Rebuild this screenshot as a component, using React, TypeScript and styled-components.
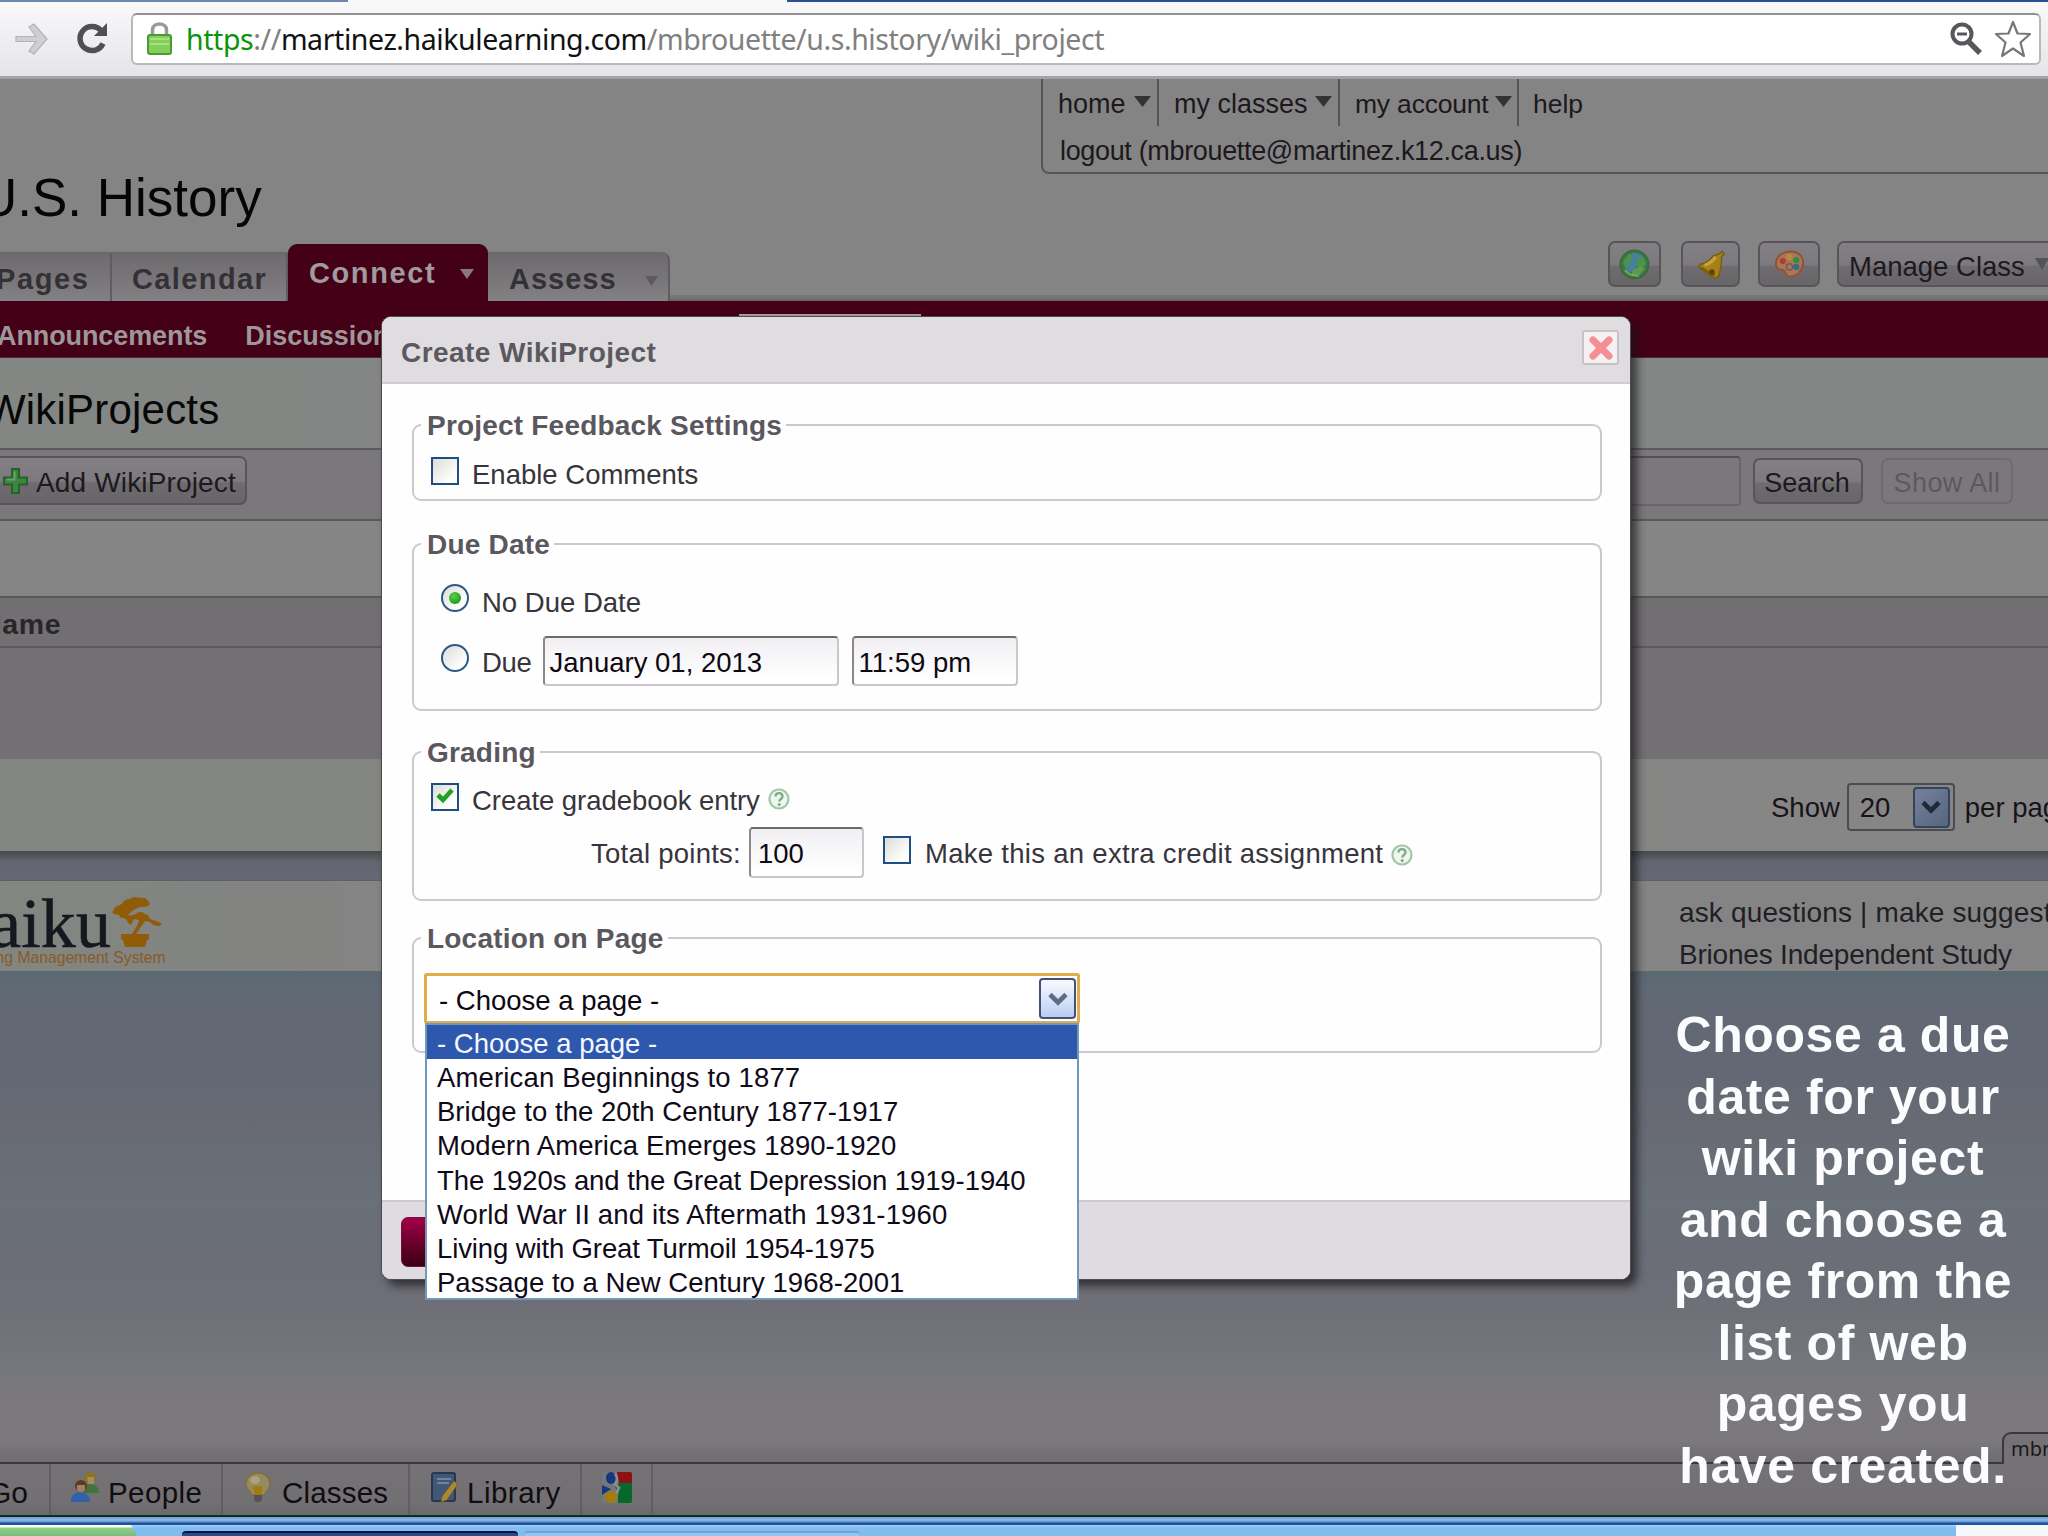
import React from 'react';
import styled, { createGlobalStyle } from 'styled-components';

const Global = createGlobalStyle`
  html, body { margin: 0; padding: 0; }
  body { font-family: "Liberation Sans", Arial, sans-serif; background: #7c797c; }
  *, *::before, *::after { box-sizing: border-box; }
`;

const Screen = styled.div`
  position: relative;
  width: 2048px;
  height: 1536px;
  overflow: hidden;
  display: flex;
  flex-direction: column;
`;

const Text = styled.span<{ $size?: number; $ls?: number; $drop?: number; $bold?: boolean; $color?: string; $ml?: number }>`
  flex: none;
  white-space: pre;
  line-height: 32px;
  font-size: ${(p) => p.$size ?? 27.5}px;
  letter-spacing: ${(p) => p.$ls ?? 0}px;
  font-weight: ${(p) => (p.$bold ? 700 : 400)};
  color: ${(p) => p.$color ?? 'inherit'};
  padding-top: ${(p) => p.$drop ?? 0}px;
  margin-left: ${(p) => p.$ml ?? 0}px;
`;

/* ---------- browser chrome ---------- */
const TabStrip = styled.div`
  flex: none;
  height: 2px;
  background: linear-gradient(90deg, #6d89ae 0 348px, #f6f8fb 348px 787px, #2d4f92 787px);
`;
const Toolbar = styled.div`
  flex: none;
  height: 77px;
  padding: 11px 7px 0 27px;
  display: flex;
  align-items: flex-start;
  background: linear-gradient(#f9f9fa, #e5e4e8);
  border-bottom: 3px solid #a3a2a6;
`;
const NavIcon = styled.svg<{ $ml?: number }>`
  flex: none;
  margin: 8px 0 0 ${(p) => p.$ml ?? 0}px;
`;
const Omnibox = styled.div`
  margin-left: 22px;
  flex: 1;
  height: 52px;
  display: flex;
  align-items: center;
  padding: 0 7px 0 14px;
  background: #fff;
  border: 2px solid #b9b9bd;
  border-top-color: #8f8f93;
  border-radius: 6px;
`;
const Url = styled.div`
  flex: 1;
  margin-left: 14px;
  font-family: "Noto Sans", "Open Sans", sans-serif;
  font-size: 28.5px;
  letter-spacing: -0.42px;
  line-height: 40px;
  white-space: pre;
  color: #808080;
`;
const Scheme = styled.span`color: #0b930b;`;
const Host = styled.span`color: #111;`;

/* ---------- class header ---------- */
const Header = styled.header`
  flex: none;
  height: 222px;
  display: grid;
  grid-template-columns: 1041px 1fr;
  background: linear-gradient(#848484 0 216px, #797678 216px 219px, #686568 221px);
`;
const HeaderLeft = styled.div`
  display: flex;
  flex-direction: column;
  overflow: hidden;
`;
const ClassTitle = styled.h1`
  margin: 0 0 0 -21px;
  height: 165px;
  padding-top: 87px;
  font-size: 53px;
  font-weight: 400;
  line-height: 64px;
  color: #050505;
  white-space: pre;
`;
const Tabs = styled.div`
  height: 57px;
  display: flex;
  align-items: flex-end;
`;
const Tab = styled.div<{ $w: number; $active?: boolean; $pad: number }>`
  flex: none;
  width: ${(p) => p.$w}px;
  height: ${(p) => (p.$active ? 57 : 49)}px;
  padding: ${(p) => (p.$active ? 13 : 9)}px 0 0 ${(p) => p.$pad}px;
  display: flex;
  align-items: flex-start;
  color: ${(p) => (p.$active ? '#a09b9e' : '#333136')};
  background: ${(p) => (p.$active ? '#440017' : 'linear-gradient(#6e6b6e, #79777a 60%, #828284)')};
  border-radius: ${(p) => (p.$active ? '9px 9px 0 0' : '0')};
  border-right: ${(p) => (p.$active ? 'none' : '2px solid #5f5d60')};
  border-top: ${(p) => (p.$active ? 'none' : '2px solid #6a686b')};
  &:last-child { border-radius: 0 8px 0 0; }
`;
const HeaderRight = styled.div`
  display: flex;
  flex-direction: column;
`;
const AccountBox = styled.div`
  height: 95px;
  border-left: 2px solid #555457;
  border-bottom: 2px solid #555457;
  border-radius: 0 0 0 8px;
  color: #1c181c;
`;
const AccountRow = styled.div`
  height: 47px;
  display: flex;
`;
const AccountItem = styled.div<{ $w: number; $pad: number }>`
  width: ${(p) => p.$w}px;
  padding: 9px 0 0 ${(p) => p.$pad}px;
  display: flex;
  align-items: flex-start;
  border-right: 2px solid #555457;
  &:last-child { border-right: none; }
`;
const Tools = styled.div`
  display: flex;
  margin: 67px 0 0 567px;
  width: 440px;
  overflow: hidden;
`;
const Button = styled.div<{ $w: number; $h?: number; $ml?: number; $faded?: boolean }>`
  flex: none;
  width: ${(p) => p.$w}px;
  height: ${(p) => p.$h ?? 46}px;
  margin-left: ${(p) => p.$ml ?? 0}px;
  display: flex;
  align-items: center;
  justify-content: center;
  white-space: pre;
  border: 2px solid ${(p) => (p.$faded ? '#6d6b6e' : '#575558')};
  border-radius: 7px;
  color: ${(p) => (p.$faded ? '#5c595d' : '#1d191e')};
  background: ${(p) => (p.$faded ? 'transparent' : 'linear-gradient(#828084, #7c7a7e 52%, #6f6c70 55%, #686569)')};
`;
const MenuButton = styled(Button)`
  justify-content: flex-start;
  padding-left: 10px;
`;
const SubNav = styled.nav`
  flex: none;
  height: 57px;
  display: flex;
  padding: 19px 0 0 0;
  margin-left: -3px;
  background: #440017;
  color: #9d979b;
  border-bottom: 1px solid #4c2630;
`;
const ActiveSubTab = styled.div`
  width: 182px;
  height: 4px;
  margin: -6px 0 0 335px;
  border-top: 2px solid #a79fa4;
`;

/* ---------- page bands ---------- */
const Band = styled.div<{ $h: number; $bg: string; $line?: string }>`
  flex: none;
  height: ${(p) => p.$h}px;
  display: flex;
  align-items: flex-start;
  background: ${(p) => p.$bg};
  border-bottom: ${(p) => (p.$line ? `2px solid ${p.$line}` : 'none')};
  overflow: hidden;
`;
const SectionTitle = styled.h2`
  margin: 28px 0 0 -14px;
  font-size: 42px;
  font-weight: 400;
  line-height: 48px;
  letter-spacing: 0.2px;
  color: #070707;
`;
const AddButton = styled(Button)`
  margin: 6px 0 0 -12px;
  justify-content: flex-start;
  padding-left: 12px;
`;
const SearchField = styled.div`
  width: 200px;
  height: 50px;
  margin: 6px 0 0 1294px;
  border: 2px solid #68666a;
  border-top-color: #535155;
  border-radius: 4px;
`;
const SearchTools = styled.div`
  display: flex;
  padding-top: 8px;
  margin-left: 12px;
`;
const ColumnTitle = styled(Text)`
  margin-top: 10px;
`;
const PageSize = styled.div`
  display: flex;
  align-items: center;
  height: 48px;
  margin: 24px 0 0 1771px;
  color: #171317;
`;
const SizeSelect = styled.div`
  width: 108px;
  height: 48px;
  margin: 0 10px 0 7px;
  padding: 0 3px 0 11px;
  display: flex;
  align-items: center;
  justify-content: space-between;
  border: 2px solid #4c4b50;
  border-radius: 4px;
`;
const Footer = styled.div`
  flex: none;
  height: 91px;
  display: grid;
  grid-template-columns: 1679px 1fr;
  background: linear-gradient(90deg, #828580, #848484 500px);
  border-top: 1px solid #5d6066;
  overflow: hidden;
`;
const Logo = styled.div`
  display: flex;
  flex-direction: column;
  padding-top: 7px;
`;
const LogoTop = styled.div`
  display: flex;
  height: 62px;
  align-items: flex-start;
`;
const LogoWord = styled.span`
  margin-left: -45px;
  width: 157px;
  white-space: pre;
  font-family: "Liberation Serif", serif;
  font-size: 70px;
  line-height: 72px;
  letter-spacing: 0.1px;
  color: #15181f;
  -webkit-text-stroke: 0.6px #15181f;
`;
const LogoMark = styled.div`
  padding-top: 8px;
`;
const LogoTag = styled.span`
  margin: -2px 0 0 -48px;
  font-size: 15.7px;
  line-height: 20px;
  white-space: pre;
  color: #895a28;
`;
const FooterLinks = styled.div`
  display: flex;
  flex-direction: column;
  gap: 10px;
  padding-top: 16px;
  color: #221e25;
`;
const Backdrop = styled.div`
  flex: none;
  height: 491px;
  background: linear-gradient(#5a6972 0, #5f6974 14px, #636974 34px, #636974 110px, #686a73 150px, #697078 230px, #6b6d77 285px, #6f6f78 340px, #73767c 385px, #7a787c 420px, #7c797d 470px, #747175 482px, #716e72);
`;
const BottomBar = styled.div`
  flex: none;
  height: 55px;
  display: flex;
  border-top: 2px solid #39383a;
  border-bottom: 2px solid #10282e;
  background: linear-gradient(#757276, #737074 75%, #686b66);
  color: #0f0d10;
`;
const BarItem = styled.div<{ $w: number; $pad: number }>`
  flex: none;
  width: ${(p) => p.$w}px;
  padding: 8px 0 0 ${(p) => p.$pad}px;
  display: flex;
  align-items: flex-start;
  border-right: 2px solid #605e63;
`;
const Taskbar = styled.div`
  flex: none;
  height: 19px;
  padding-top: 8px;
  display: flex;
  align-items: flex-start;
  background: linear-gradient(#6d9cc4 0, #8dbbe6 3px, #5f93c8 5px, #1f4fa6 6px, #2350a8 8px, #a8d0f2 8px, #7fbdee 11px);
`;
const StartButton = styled.div`
  width: 137px;
  height: 11px;
  background: linear-gradient(#f4fff0 0 2px, #8fce8d 3px, #79bd77);
  clip-path: polygon(0 0, 131px 0, 137px 100%, 0 100%);
`;
const TaskButton = styled.div<{ $ml: number; $active?: boolean }>`
  width: 336px;
  height: 5px;
  margin: 6px 0 0 ${(p) => p.$ml}px;
  border-radius: 4px 4px 0 0;
  border-top: 2px solid ${(p) => (p.$active ? '#04104c' : '#6fa0dc')};
  background: ${(p) => (p.$active ? '#2c4a86' : '#92c6f3')};
`;
const Tray = styled.div`
  margin-left: auto;
  width: 92px;
  height: 11px;
  background: #f3f8fd;
`;
const UserTab = styled.div`
  position: absolute;
  left: 2002px;
  top: 1432px;
  width: 60px;
  height: 32px;
  padding-left: 7px;
  border: 2px solid #39383a;
  border-bottom: none;
  border-radius: 9px 0 0 0;
  background: #757276;
  font-family: "Noto Sans", sans-serif;
  font-size: 20px;
  line-height: 29px;
  color: #1a181c;
`;
const Caption = styled.div`
  position: absolute;
  left: 1653px;
  top: 1005px;
  width: 380px;
  text-align: center;
  font-size: 50px;
  font-weight: 700;
  line-height: 61.5px;
  letter-spacing: 0.6px;
  white-space: pre;
  color: #fbfcfe;
`;

/* ---------- dialog ---------- */
const Dialog = styled.section`
  position: absolute;
  left: 381px;
  top: 316px;
  width: 1250px;
  height: 964px;
  display: flex;
  flex-direction: column;
  background: #fefefe;
  border: 1px solid #4d4b4e;
  border-radius: 10px;
  box-shadow: 6px 6px 8px rgba(20, 18, 22, 0.65);
  color: #38343c;
`;
const DialogHead = styled.div`
  flex: none;
  height: 67px;
  padding: 13px 11px 0 19px;
  display: flex;
  justify-content: space-between;
  align-items: flex-start;
  background: #dfdde0;
  border-bottom: 2px solid #cfcdd0;
  border-radius: 9px 9px 0 0;
  color: #5b585f;
`;
const CloseButton = styled.div`
  width: 37px;
  height: 35px;
  display: flex;
  align-items: center;
  justify-content: center;
  background: #f5f1f3;
  border: 2px solid #c6c2c6;
  border-radius: 3px;
`;
const DialogBody = styled.div`
  flex: 1;
  padding: 25px 28px 0 30px;
`;
const Fieldset = styled.fieldset<{ $h: number; $mt?: number }>`
  height: ${(p) => p.$h}px;
  margin: ${(p) => p.$mt ?? 0}px 0 0;
  padding: 0;
  min-width: 0;
  border: 2px solid #cbc9cd;
  border-radius: 9px;
`;
const Legend = styled.legend`
  margin-left: 7px;
  padding: 1px 4px 0 6px;
  font-size: 28px;
  font-weight: 700;
  line-height: 31px;
  letter-spacing: 0.2px;
  color: #5a575f;
`;
const Row = styled.div<{ $h: number; $mt: number; $pad: number }>`
  display: flex;
  align-items: center;
  height: ${(p) => p.$h}px;
  margin-top: ${(p) => p.$mt}px;
  padding-left: ${(p) => p.$pad}px;
`;
const CheckBox = styled.span<{ $ml?: number; $lift?: number }>`
  flex: none;
  width: 28px;
  height: 28px;
  margin: 0 0 ${(p) => p.$lift ?? 0}px ${(p) => p.$ml ?? 0}px;
  display: flex;
  align-items: center;
  justify-content: center;
  border: 2px solid #1d4f83;
  background: linear-gradient(135deg, #dcdcd7, #fdfdfc 75%);
`;
const Radio = styled(CheckBox)`
  border-radius: 50%;
  border-color: #2b5a88;
`;
const RadioDot = styled.span`
  width: 12px;
  height: 12px;
  border-radius: 50%;
  background: radial-gradient(circle at 40% 35%, #5ad24c, #1c9a1c 75%);
`;
const Field = styled.div<{ $w: number; $ml: number; $h?: number }>`
  flex: none;
  width: ${(p) => p.$w}px;
  height: ${(p) => p.$h ?? 50}px;
  margin-left: ${(p) => p.$ml}px;
  padding-left: 5px;
  display: flex;
  align-items: center;
  border: 2px solid #c9c7cb;
  border-top-color: #6d6b70;
  border-left-color: #8a888d;
  border-radius: 4px;
  background: linear-gradient(#f1eff2, #fff 90%);
  color: #0d0812;
`;
const Select = styled.div`
  position: relative;
  width: 656px;
  height: 51px;
  margin: 19px 0 0 10px;
  padding: 0 1px 0 12px;
  display: flex;
  align-items: center;
  justify-content: space-between;
  background: #fff;
  border: 3px solid #e0ac4c;
  border-radius: 3px;
  color: #0d0812;
`;
const ArrowButton = styled.div<{ $dim?: boolean }>`
  width: 37px;
  height: 41px;
  display: flex;
  align-items: center;
  justify-content: center;
  border: 2px solid ${(p) => (p.$dim ? '#34445c' : '#41517a')};
  border-radius: 4px;
  background: ${(p) => (p.$dim ? 'linear-gradient(135deg, #77809a, #56657f)' : 'linear-gradient(#f4f7fd 10%, #b9cdf2)')};
`;
const Options = styled.ul`
  position: absolute;
  z-index: 2;
  left: -2px;
  top: 47px;
  width: 654px;
  height: 277px;
  margin: 0;
  padding: 0;
  list-style: none;
  background: #fff;
  border: 2px solid #7396bb;
`;
const Option = styled.li<{ $selected?: boolean; $ls?: number }>`
  height: 34.15px;
  padding-left: 10px;
  font-size: 27.5px;
  line-height: 37px;
  letter-spacing: ${(p) => p.$ls ?? 0}px;
  white-space: pre;
  color: ${(p) => (p.$selected ? '#f4f7ff' : '#100a18')};
  background: ${(p) => (p.$selected ? '#2e58ae' : 'transparent')};
`;
const DialogFoot = styled.div`
  flex: none;
  height: 79px;
  padding: 15px 0 0 19px;
  background: #dedce0;
  border-top: 2px solid #cbc9cc;
  border-radius: 0 0 9px 9px;
`;
const SaveButton = styled.div`
  width: 120px;
  height: 50px;
  border-radius: 7px;
  border: 1px solid #6d1238;
  background: linear-gradient(#a5004b, #6c002c 50%, #3b0014);
`;

/* ---------- drawings ---------- */
const CaretMark = styled.svg<{ $ml?: number; $mt?: number }>`
  flex: none;
  margin: ${(p) => p.$mt ?? 8}px 0 0 ${(p) => p.$ml ?? 0}px;
`;
const Caret = ({ w = 17, h = 11, ml = 0, mt = 8, color = '#343236' }) => (
  <CaretMark width={w} height={h} viewBox="0 0 18 12" preserveAspectRatio="none" $ml={ml} $mt={mt}>
    <path d="M0 0h18L9 12z" fill={color} />
  </CaretMark>
);
const Chevron = ({ color }: { color: string }) => (
  <svg width="20" height="14" viewBox="0 0 20 14">
    <path d="M2 2.500l8 8 8-8" fill="none" stroke={color} strokeWidth="4.600" />
  </svg>
);
const HelpMark = styled.svg`
  flex: none;
  margin: 4px 0 0 8px;
`;
const Help = () => (
  <HelpMark width="22" height="22" viewBox="0 0 22 22">
    <circle cx="11" cy="11" r="9.500" fill="#eef6ee" stroke="#a3c6a8" strokeWidth="2.200" />
    <path d="M7.500 8.500c0-4.500 7-4.500 7 0 0 2.500-3.200 2.600-3.200 5" fill="none" stroke="#7fab86" strokeWidth="2.400" />
    <circle cx="11.200" cy="16.500" r="1.500" fill="#7fab86" />
  </HelpMark>
);
const Globe = () => (
  <svg width="31" height="31" viewBox="0 0 32 32">
    <circle cx="16" cy="16" r="14.500" fill="#3a7a48" stroke="#3c6a3a" strokeWidth="2" />
    <path d="M15 4c6 0 10 3 12 8l-8 4-4 8-7-1c-4-9-1-17 7-19z" fill="#4a7f9c" />
    <path d="M4 14l6-9 4 2-3 8-4 5zM20 8l6 2 2 6-6 4-4-4z" fill="#4c9248" />
    <path d="M14 22l8-5 5 3-6 7-8 1z" fill="#5d9a4f" />
    <path d="M6 22l5 4 9 2" stroke="#78a868" strokeWidth="2" fill="none" />
  </svg>
);
const Bell = () => (
  <svg width="30" height="31" viewBox="0 0 32 32">
    <path d="M28 2l2 3-3 3c1 8-1 14-3 21l-4 2L3 19l1-3c6-1 10-3 14-9l6-2z" fill="#a58118" stroke="#7a5a0d" strokeWidth="1.500" />
    <path d="M9 17c6-2 9-5 12-9" stroke="#c2a440" strokeWidth="3.500" fill="none" />
    <path d="M5 19l15 9" stroke="#7a5a0d" strokeWidth="2" />
    <circle cx="17" cy="24" r="3" fill="#5f4208" />
  </svg>
);
const Palette = () => (
  <svg width="31" height="30" viewBox="0 0 32 30">
    <path d="M17 2c9 0 14 6 13 13s-6 13-14 13c-5 0-3-6-7-7-4 0-7-2-7-6C2 7 9 2 17 2z" fill="#a6785a" stroke="#925230" strokeWidth="2" />
    <circle cx="9" cy="12" r="3.200" fill="#b23a34" />
    <circle cx="16" cy="8" r="3.200" fill="#b0903b" />
    <circle cx="23" cy="11" r="3.200" fill="#3c8a42" />
    <circle cx="23" cy="18" r="3.200" fill="#2f6f96" />
    <circle cx="16" cy="18" r="3.200" fill="#868086" stroke="#925230" strokeWidth="1.500" />
  </svg>
);
const Plus = () => (
  <svg width="27" height="28" viewBox="0 0 27 28">
    <path d="M10 2h7v8.500h8v7h-8V26h-7v-8.500H2v-7h8z" fill="#3f8540" stroke="#28602b" strokeWidth="2" />
    <path d="M12.500 4.500v8H5" stroke="#67a463" strokeWidth="2" fill="none" />
  </svg>
);
const Bonsai = () => (
  <svg width="52" height="52" viewBox="0 0 52 52" fill="#915c08">
    <path d="M11 6c1-2 4-3 7-3 2-2 6-3 9-1 4-1 8 0 9 3 2 1 2 4 0 5-3 1-6 1-8 1-4 1-6 3-8 4l-4 4c3 1 7 0 9-2 3-2 6-1 8 1 3 0 4 2 5 5l6 2 5 2c1 1 0 3-2 3l-6-1-3-3-5-1-9 13h-4l5-8 2-6-5-1-3 6-3-2-2-4-6-2-1-2-5-1c-2-1-2-3 0-4 0-3 3-4 6-5l3-2z" />
    <path d="M9 38h28v5l-2 1-2 7H13l-2-7-2-1z" />
  </svg>
);
const People = () => (
  <svg width="30" height="31" viewBox="0 0 30 31">
    <circle cx="20" cy="6" r="6" fill="#8b7426" />
    <path d="M17 5h7v6l-3 3-3-3z" fill="#a58c66" />
    <path d="M12 20c0-6 5-8 9-8s8 3 8 9H15z" fill="#43733c" />
    <circle cx="11" cy="14" r="6" fill="#5d3a24" />
    <path d="M7 13h8v5l-4 4-4-4z" fill="#a07f63" />
    <path d="M1 30c0-7 4-10 9-10s10 3 10 10z" fill="#2f62a8" />
  </svg>
);
const Bulb = () => (
  <svg width="26" height="31" viewBox="0 0 26 31">
    <path d="M13 1c7 0 12 5 12 11 0 5-4 7-6 11H7C5 19 1 17 1 12 1 6 6 1 13 1z" fill="#958a60" stroke="#80703f" strokeWidth="1.500" />
    <path d="M8 14h10l-2 9h-6z" fill="#a37a10" />
    <ellipse cx="10" cy="8" rx="5" ry="4" fill="#aaa27f" />
    <path d="M9 23h8v5l-2 2h-4l-2-2z" fill="#55535a" />
  </svg>
);
const Notebook = () => (
  <svg width="28" height="31" viewBox="0 0 28 31">
    <rect x="1" y="1" width="23" height="28" rx="2" fill="#3f5878" stroke="#26374f" strokeWidth="2" />
    <path d="M6 7h14M6 11h12" stroke="#6f849e" strokeWidth="2" />
    <path d="M23 9l4 3-11 16-6 2 1-6z" fill="#a68a3a" stroke="#77561c" />
  </svg>
);
const Google = () => (
  <svg width="30" height="31" viewBox="0 0 30 31">
    <rect width="30" height="31" rx="2" fill="#77777b" />
    <path d="M15 0h13q2 0 2 2v9H17z" fill="#8f1010" />
    <path d="M17 11h13v18q0 2-2 2H16V19l-3-4z" fill="#07682c" />
    <path d="M0 13l9 4-9 6z" fill="#17367e" />
    <ellipse cx="9" cy="6" rx="5" ry="6" fill="#17367e" />
    <ellipse cx="9" cy="25" rx="6" ry="6" fill="#a67c08" />
    <path d="M13 2q4 5 0 10l4 4q-2 3-2 6" stroke="#8d8d90" strokeWidth="2.500" fill="none" />
  </svg>
);

const PAGES: { name: string; ls: number }[] = [
  { name: 'American Beginnings to 1877', ls: 0.15 },
  { name: 'Bridge to the 20th Century 1877-1917', ls: 0.03 },
  { name: 'Modern America Emerges 1890-1920', ls: 0.07 },
  { name: 'The 1920s and the Great Depression 1919-1940', ls: -0.07 },
  { name: 'World War II and its Aftermath 1931-1960', ls: 0.15 },
  { name: 'Living with Great Turmoil 1954-1975', ls: -0.12 },
  { name: 'Passage to a New Century 1968-2001', ls: 0.03 },
];

const CAPTION = ['Choose a due', 'date for your', 'wiki project', 'and choose a', 'page from the', 'list of web', 'pages you', 'have created.'];

const ToolbarGlyph = styled.svg<{ $mr?: number }>`
  flex: none;
  margin-right: ${(p) => p.$mr ?? 0}px;
`;

export default function App() {
  return (
    <Screen>
      <Global />
      <TabStrip />
      <Toolbar>
        <NavIcon $ml={-12} width="34" height="34" viewBox="0 0 34 34">
          <path d="M1 15.500h20L14 6l5-3 13 15-13 15-5-3 7-9.500H1z" fill="#cfcfd2" stroke="#b4b4b8" strokeWidth="1.200" />
        </NavIcon>
        <NavIcon $ml={26} width="34" height="34" viewBox="0 0 34 34">
          <path d="M28 22.500a12 12 0 1 1-2-13" fill="none" stroke="#505054" strokeWidth="5.500" />
          <path d="M32 2v13H19z" fill="#505054" />
        </NavIcon>
        <Omnibox>
          <ToolbarGlyph width="25" height="34" viewBox="0 0 25 34">
            <path d="M5.500 15V8c0-8 14-8 14 0v7" fill="none" stroke="#9a9a9e" strokeWidth="3.500" />
            <rect x="1" y="13" width="23" height="19" rx="2" fill="#84cf5c" stroke="#4d9a35" strokeWidth="2" />
            <path d="M3 17h19M3 22h19" stroke="#a5e382" strokeWidth="2" />
          </ToolbarGlyph>
          <Url><Scheme>https</Scheme>://<Host>martinez.haikulearning.com</Host>/mbrouette/u.s.history/wiki_project</Url>
          <ToolbarGlyph $mr={11} width="34" height="34" viewBox="0 0 34 34">
            <circle cx="13" cy="12" r="9.500" fill="#fff" stroke="#58585c" strokeWidth="4" />
            <path d="M8 12h10" stroke="#58585c" strokeWidth="3" />
            <path d="M19 19l12 12" stroke="#58585c" strokeWidth="5.500" />
          </ToolbarGlyph>
          <ToolbarGlyph width="38" height="38" viewBox="0 0 38 38">
            <path d="M19 2l4.500 11.500L36 14l-9.500 8.500L30 36l-11-7.500L8 36l3.500-13.500L2 14l12.500-.5z" fill="#fff" stroke="#77777b" strokeWidth="2.200" strokeLinejoin="round" />
          </ToolbarGlyph>
        </Omnibox>
      </Toolbar>

      <Header>
        <HeaderLeft>
          <ClassTitle>U.S. History</ClassTitle>
          <Tabs>
            <Tab $w={112} $pad={0}><Text $bold $size={29} $ls={1.600} $ml={-4}>Pages</Text></Tab>
            <Tab $w={176} $pad={20}><Text $bold $size={29} $ls={1.400}>Calendar</Text></Tab>
            <Tab $w={200} $pad={21} $active>
              <Text $bold $size={29} $ls={1.600}>Connect</Text>
              <Caret w={14} h={10} ml={24} mt={12} color="#877782" />
            </Tab>
            <Tab $w={182} $pad={21}>
              <Text $bold $size={29} $ls={1}>Assess</Text>
              <Caret w={13} h={10} ml={28} mt={13} color="#5d5a60" />
            </Tab>
          </Tabs>
        </HeaderLeft>
        <HeaderRight>
          <AccountBox>
            <AccountRow>
              <AccountItem $w={116} $pad={15}><Text $size={27}>home</Text><Caret ml={8} /></AccountItem>
              <AccountItem $w={181} $pad={15}><Text $size={27}>my classes</Text><Caret ml={7} /></AccountItem>
              <AccountItem $w={179} $pad={15}><Text $size={26.5} $ls={-0.2}>my account</Text><Caret ml={6} /></AccountItem>
              <AccountItem $w={100} $pad={14}><Text $size={26.5}>help</Text></AccountItem>
            </AccountRow>
            <AccountRow>
              <AccountItem $w={600} $pad={17}><Text $size={27} $ls={-0.34}>logout (mbrouette@martinez.k12.ca.us)</Text></AccountItem>
            </AccountRow>
          </AccountBox>
          <Tools>
            <Button $w={53}><Globe /></Button>
            <Button $w={59} $ml={20}><Bell /></Button>
            <Button $w={62} $ml={18}><Palette /></Button>
            <MenuButton $w={240} $ml={17}>
              <Text $drop={6}>Manage Class</Text><Caret w={14} h={12} ml={10} mt={0} color="#55535a" />
            </MenuButton>
          </Tools>
        </HeaderRight>
      </Header>

      <SubNav>
        <Text $bold $size={27} $ls={-0.1}>Announcements</Text>
        <Text $bold $size={27} $ml={38}>Discussions</Text>
        <ActiveSubTab />
      </SubNav>

      <Band $h={92} $bg="linear-gradient(90deg,#848684,#828684)" $line="#5b5a5c">
        <SectionTitle>WikiProjects</SectionTitle>
      </Band>
      <Band $h={71} $bg="#7b787b" $line="#5b595b">
        <AddButton $w={259} $h={49}>
          <Plus /><Text $size={28} $ml={7} $drop={5} $ls={0.15}>Add WikiProject</Text>
        </AddButton>
        <SearchField />
        <SearchTools>
          <Button $w={110}><Text $size={27} $ml={-2} $drop={4}>Search</Text></Button>
          <Button $w={132} $ml={18} $faded><Text $size={27} $ls={0.4} $drop={4}>Show All</Text></Button>
        </SearchTools>
      </Band>
      <Band $h={77} $bg="#848584" $line="#5a585a" />
      <Band $h={50} $bg="#726f72" $line="#5c5a5d">
        <ColumnTitle $bold $size={28.5} $ls={0.7} $ml={-19} $color="#29262a">Name</ColumnTitle>
      </Band>
      <Band $h={111} $bg="#737073" />
      <Band $h={92} $bg="linear-gradient(90deg,#828680,#848482 900px,#868686)">
        <PageSize>
          <Text $drop={2}>Show</Text>
          <SizeSelect><Text $drop={2}>20</Text><ArrowButton $dim><Chevron color="#20293a" /></ArrowButton></SizeSelect>
          <Text $drop={2}>per page</Text>
        </PageSize>
      </Band>
      <Band $h={29} $bg="linear-gradient(#454a4a,#52565b 5px,#636670 11px,#666974)" />
      <Footer>
        <Logo>
          <LogoTop><LogoWord>haiku</LogoWord><LogoMark><Bonsai /></LogoMark></LogoTop>
          <LogoTag>Learning Management System</LogoTag>
        </Logo>
        <FooterLinks>
          <Text $size={28} $ls={0.15}>ask questions | make suggestions</Text>
          <Text $size={28} $ls={-0.2}>Briones Independent Study</Text>
        </FooterLinks>
      </Footer>
      <Backdrop />
      <BottomBar>
        <BarItem $w={51} $pad={0}><Text $size={30} $ml={-12} $drop={5}>Go</Text></BarItem>
        <BarItem $w={172} $pad={19}><People /><Text $size={29.5} $ls={0.4} $ml={8} $drop={5}>People</Text></BarItem>
        <BarItem $w={187} $pad={22}><Bulb /><Text $size={29.5} $ls={0.2} $ml={11} $drop={5}>Classes</Text></BarItem>
        <BarItem $w={172} $pad={21}><Notebook /><Text $size={29.5} $ls={0.5} $ml={8} $drop={5}>Library</Text></BarItem>
        <BarItem $w={71} $pad={20}><Google /></BarItem>
      </BottomBar>
      <Taskbar>
        <StartButton />
        <TaskButton $ml={45} $active />
        <TaskButton $ml={6} />
        <Tray />
      </Taskbar>

      <UserTab>mbrouette</UserTab>
      <Caption>{CAPTION.join('\n')}</Caption>

      <Dialog>
        <DialogHead>
          <Text $bold $size={28} $ls={0.45} $drop={7}>Create WikiProject</Text>
          <CloseButton>
            <svg width="26" height="26" viewBox="0 0 26 26">
              <path d="M5 5l16 16M21 5L5 21" stroke="#f58e92" strokeWidth="7" strokeLinecap="round" />
            </svg>
          </CloseButton>
        </DialogHead>
        <DialogBody>
          <Fieldset $h={92}>
            <Legend>Project Feedback Settings</Legend>
            <Row $h={28} $mt={16} $pad={17}>
              <CheckBox /><Text $ml={13} $drop={7}>Enable Comments</Text>
            </Row>
          </Fieldset>
          <Fieldset $h={183} $mt={27}>
            <Legend>Due Date</Legend>
            <Row $h={28} $mt={24} $pad={27}>
              <Radio><RadioDot /></Radio><Text $ml={13} $drop={9}>No Due Date</Text>
            </Row>
            <Row $h={50} $mt={24} $pad={27}>
              <Radio $lift={6} /><Text $ml={13} $ls={-0.3} $drop={3}>Due</Text>
              <Field $w={296} $ml={11}><Text $drop={3}>January 01, 2013</Text></Field>
              <Field $w={166} $ml={13}><Text $drop={3}>11:59 pm</Text></Field>
            </Row>
          </Fieldset>
          <Fieldset $h={165} $mt={25}>
            <Legend>Grading</Legend>
            <Row $h={28} $mt={15} $pad={17}>
              <CheckBox>
                <svg width="20" height="20" viewBox="0 0 20 20"><path d="M3 8l5 5 9-10" fill="none" stroke="#21a121" strokeWidth="4.600" /></svg>
              </CheckBox>
              <Text $ml={13} $ls={-0.05} $drop={7}>Create gradebook entry</Text><Help />
            </Row>
            <Row $h={51} $mt={16} $pad={177}>
              <Text $ls={0.25} $drop={3}>Total points:</Text>
              <Field $w={115} $h={51} $ml={8}><Text $ml={2} $drop={2}>100</Text></Field>
              <CheckBox $ml={19} $lift={5} />
              <Text $ml={14} $ls={0.29} $drop={3}>Make this an extra credit assignment</Text><Help />
            </Row>
          </Fieldset>
          <Fieldset $h={131} $mt={21}>
            <Legend>Location on Page</Legend>
            <Select>
              <Text $drop={4}>- Choose a page -</Text>
              <ArrowButton><Chevron color="#5a6d86" /></ArrowButton>
              <Options>
                <Option $selected>- Choose a page -</Option>
                {PAGES.map((page) => <Option key={page.name} $ls={page.ls}>{page.name}</Option>)}
              </Options>
            </Select>
          </Fieldset>
        </DialogBody>
        <DialogFoot><SaveButton /></DialogFoot>
      </Dialog>
    </Screen>
  );
}
